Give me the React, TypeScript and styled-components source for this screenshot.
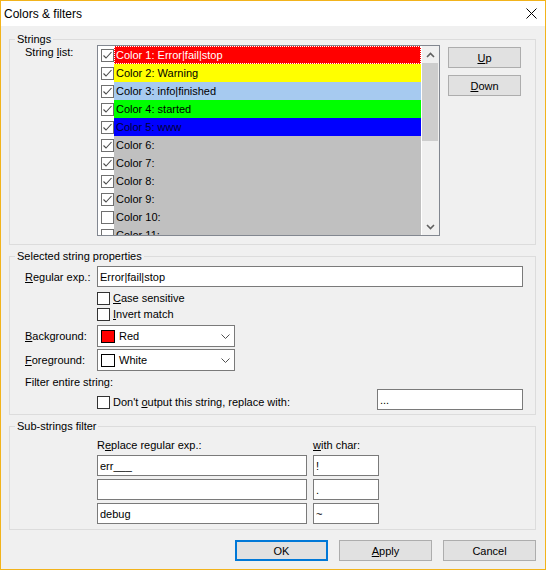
import React from 'react';
import styled, { createGlobalStyle } from 'styled-components';

const GlobalStyle = createGlobalStyle`
  html, body {
    margin: 0;
    padding: 0;
    background: #f0f0f0;
  }
  body {
    font-family: "Liberation Sans", Arial, sans-serif;
    font-size: 11px;
    color: #000;
  }
  * {
    box-sizing: border-box;
  }
`;

type Item = { label: string; bg: string; fg?: string; checked: boolean; focus?: boolean };

const items: Item[] = [
  { label: 'Color 1: Error|fail|stop', bg: '#ff0000', fg: '#ffffff', checked: true, focus: true },
  { label: 'Color 2: Warning', bg: '#ffff00', checked: true },
  { label: 'Color 3: info|finished', bg: '#a6caf0', checked: true },
  { label: 'Color 4: started', bg: '#00ff00', checked: true },
  { label: 'Color 5: www', bg: '#0000ff', fg: '#000033', checked: true },
  { label: 'Color 6:', bg: '#c0c0c0', checked: true },
  { label: 'Color 7:', bg: '#c0c0c0', checked: true },
  { label: 'Color 8:', bg: '#c0c0c0', checked: true },
  { label: 'Color 9:', bg: '#c0c0c0', checked: true },
  { label: 'Color 10:', bg: '#c0c0c0', checked: false },
  { label: 'Color 11:', bg: '#c0c0c0', checked: false },
];

const subFilters = [
  { expr: 'err___', ch: '!' },
  { expr: '', ch: '.' },
  { expr: 'debug', ch: '~' },
];

export default function App() {
  return (
    <>
      <GlobalStyle />
      <Window>
        <TitleBar>
          <TitleText>Colors &amp; filters</TitleText>
          <svg width="11" height="11" viewBox="0 0 11 11">
            <path d="M0.5 0.5 L10.5 10.5 M10.5 0.5 L0.5 10.5" stroke="#000" strokeWidth="1" />
          </svg>
        </TitleBar>

        <Body>
          <Group>
            <Legend>Strings</Legend>
            <StringsContent>
              <Label>
                String <u>l</u>ist:
              </Label>
              <ListBox>
                <Rows>
                  {items.map((it) => (
                    <Row key={it.label}>
                      <CheckCell>
                        <CheckBox $checked={it.checked} $tone="list" />
                      </CheckCell>
                      <Band $bg={it.bg} $fg={it.fg} $focus={it.focus}>
                        {it.label}
                      </Band>
                    </Row>
                  ))}
                </Rows>
                <ScrollBar>
                  <ArrowBtn>
                    <svg width="9" height="6" viewBox="0 0 9 6">
                      <path d="M1 5 L4.5 1.5 L8 5" fill="none" stroke="#606060" strokeWidth="1.6" />
                    </svg>
                  </ArrowBtn>
                  <Thumb />
                  <Track />
                  <ArrowBtn>
                    <svg width="9" height="6" viewBox="0 0 9 6">
                      <path d="M1 1 L4.5 4.5 L8 1" fill="none" stroke="#606060" strokeWidth="1.6" />
                    </svg>
                  </ArrowBtn>
                </ScrollBar>
              </ListBox>
              <SideButtons>
                <Button $w={73}>
                  <u>U</u>p
                </Button>
                <Button $w={73}>
                  <u>D</u>own
                </Button>
              </SideButtons>
            </StringsContent>
          </Group>

          <Group>
            <Legend>Selected string properties</Legend>
            <PropsContent>
              <FieldRow>
                <Label>
                  <u>R</u>egular exp.:
                </Label>
                <TextBox readOnly value="Error|fail|stop" />
              </FieldRow>
              <CheckRow $mt={5}>
                <CheckBox $checked={false} $tone="dialog" />
                <CheckLabel>
                  <u>C</u>ase sensitive
                </CheckLabel>
              </CheckRow>
              <CheckRow $mt={3}>
                <CheckBox $checked={false} $tone="dialog" />
                <CheckLabel>
                  <u>I</u>nvert match
                </CheckLabel>
              </CheckRow>
              <FieldRow $mt={4}>
                <Label>
                  <u>B</u>ackground:
                </Label>
                <Combo>
                  <Swatch $color="#ff0000" />
                  <ComboText>Red</ComboText>
                  <Chevron />
                </Combo>
              </FieldRow>
              <FieldRow $mt={2}>
                <Label>
                  <u>F</u>oreground:
                </Label>
                <Combo>
                  <Swatch $color="#ffffff" />
                  <ComboText>White</ComboText>
                  <Chevron />
                </Combo>
              </FieldRow>
              <PlainText $mt={4}>Filter entire string:</PlainText>
              <ReplaceRow>
                <CheckRow $mt={7}>
                  <CheckBox $checked={false} $tone="dialog" />
                  <CheckLabel>
                    Don't <u>o</u>utput this string, replace with:
                  </CheckLabel>
                </CheckRow>
                <TextBox readOnly value="..." $w={146} />
              </ReplaceRow>
            </PropsContent>
          </Group>

          <Group>
            <Legend>Sub-strings filter</Legend>
            <SubGrid>
              <ColHead>
                R<u>e</u>place regular exp.:
              </ColHead>
              <ColHead>
                <u>w</u>ith char:
              </ColHead>
              {subFilters.map((f, i) => (
                <React.Fragment key={i}>
                  <TextBox readOnly value={f.expr} />
                  <TextBox readOnly value={f.ch} />
                </React.Fragment>
              ))}
            </SubGrid>
          </Group>

          <ButtonRow>
            <Button $w={93} $primary>
              OK
            </Button>
            <Button $w={93}>
              <u>A</u>pply
            </Button>
            <Button $w={93}>Cancel</Button>
          </ButtonRow>
        </Body>
      </Window>
    </>
  );
}

function CheckBox({ $checked, $tone }: { $checked: boolean; $tone: 'list' | 'dialog' }) {
  return (
    <Box $tone={$tone}>
      {$checked && (
        <svg width="11" height="11" viewBox="0 0 11 11">
          <path d="M1.5 5.5 L4 8 L9.5 2" fill="none" stroke="#4a4a4a" strokeWidth="1.1" />
        </svg>
      )}
    </Box>
  );
}

function Chevron() {
  return (
    <ChevronIcon width="9" height="5" viewBox="0 0 9 5">
      <path d="M0.5 0.5 L4.5 4.5 L8.5 0.5" fill="none" stroke="#505050" strokeWidth="1" />
    </ChevronIcon>
  );
}

const Window = styled.div`
  width: 546px;
  height: 570px;
  border: 1px solid #f2b31b;
  background: #f0f0f0;
  display: flex;
  flex-direction: column;
`;

const TitleBar = styled.div`
  height: 25px;
  flex-shrink: 0;
  background: #fff;
  display: flex;
  align-items: center;
  justify-content: space-between;
  padding: 0 8px 0 3px;
`;

const TitleText = styled.span`
  font-size: 12px;
`;

const Body = styled.div`
  flex: 1;
  display: flex;
  flex-direction: column;
  gap: 5px;
  padding: 7px 9px 0 8px;
`;

const Group = styled.fieldset`
  margin: 0;
  padding: 0;
  min-width: 0;
  border: 1px solid #dcdcdc;
`;

const Legend = styled.legend`
  margin-left: 5px;
  padding: 0 2px;
  line-height: 12px;
  font-size: 11px;
`;

const StringsContent = styled.div`
  display: grid;
  grid-template-columns: 72px 343px 73px;
  align-items: start;
  padding: 0 0 8px 15px;
`;

const Label = styled.div`
  width: 72px;
  flex-shrink: 0;
  line-height: 14px;
  white-space: nowrap;
`;

const ListBox = styled.div`
  height: 191px;
  border: 1px solid #828790;
  background: #fff;
  display: flex;
  overflow: hidden;
`;

const Rows = styled.div`
  flex: 1;
  padding-right: 1px;
  display: flex;
  flex-direction: column;
  overflow: hidden;
`;

const Row = styled.div`
  height: 18px;
  flex-shrink: 0;
  display: flex;
`;

const CheckCell = styled.div`
  width: 16px;
  flex-shrink: 0;
  display: flex;
  align-items: center;
  padding-left: 3px;
`;

const Band = styled.div<{ $bg: string; $fg?: string; $focus?: boolean }>`
  flex: 1;
  background: ${(p) => p.$bg};
  color: ${(p) => p.$fg ?? '#000'};
  line-height: 18px;
  padding-left: 2px;
  white-space: nowrap;
  overflow: hidden;
  outline: ${(p) => (p.$focus ? '1px dotted #fff' : 'none')};
  outline-offset: -1px;
`;

const ScrollBar = styled.div`
  width: 17px;
  flex-shrink: 0;
  background: #f0f0f0;
  display: flex;
  flex-direction: column;
`;

const ArrowBtn = styled.div`
  height: 17px;
  flex-shrink: 0;
  display: flex;
  align-items: center;
  justify-content: center;
`;

const Thumb = styled.div`
  height: 78px;
  margin: 0 1px 0 0;
  background: #cdcdcd;
`;

const Track = styled.div`
  flex: 1;
`;

const SideButtons = styled.div`
  display: flex;
  flex-direction: column;
  gap: 7px;
  margin: 2px 0 0 8px;
`;

const Button = styled.button<{ $w: number; $primary?: boolean }>`
  width: ${(p) => p.$w}px;
  height: 21px;
  padding: 0;
  font: inherit;
  color: #000;
  background: #e1e1e1;
  border: ${(p) => (p.$primary ? '2px solid #0078d7' : '1px solid #adadad')};
  text-align: center;
`;

const PropsContent = styled.div`
  display: flex;
  flex-direction: column;
  padding: 4px 12px 4px 15px;
`;

const FieldRow = styled.div<{ $mt?: number }>`
  display: flex;
  align-items: center;
  margin-top: ${(p) => p.$mt ?? 0}px;
`;

const TextBox = styled.input<{ $w?: number }>`
  ${(p) => (p.$w ? `width: ${p.$w}px;` : 'flex: 1; width: 100%;')}
  min-width: 0;
  height: 21px;
  margin: 0;
  padding: 0 2px;
  font: inherit;
  color: #000;
  background: #fff;
  border: 1px solid #7a7a7a;
  outline: none;
`;

const CheckRow = styled.div<{ $mt?: number }>`
  display: flex;
  align-items: center;
  height: 13px;
  padding-left: 72px;
  margin-top: ${(p) => p.$mt ?? 0}px;
`;

const Box = styled.div<{ $tone: 'list' | 'dialog' }>`
  width: 13px;
  height: 13px;
  flex-shrink: 0;
  background: #fff;
  border: 1px solid ${(p) => (p.$tone === 'list' ? '#707070' : '#333333')};
  display: flex;
  align-items: center;
  justify-content: center;
`;

const CheckLabel = styled.span`
  margin-left: 3px;
  line-height: 13px;
  white-space: nowrap;
`;

const Combo = styled.div`
  width: 138px;
  height: 22px;
  background: #fff;
  border: 1px solid #7a7a7a;
  display: flex;
  align-items: center;
  padding: 0 4px 0 3px;
`;

const Swatch = styled.div<{ $color: string }>`
  width: 14px;
  height: 13px;
  background: ${(p) => p.$color};
  border: 1px solid #000;
`;

const ComboText = styled.span`
  margin-left: 4px;
`;

const ChevronIcon = styled.svg`
  margin-left: auto;
`;

const PlainText = styled.div<{ $mt?: number }>`
  line-height: 14px;
  margin-top: ${(p) => p.$mt ?? 0}px;
`;

const ReplaceRow = styled.div`
  display: flex;
  align-items: flex-start;
  height: 21px;
  justify-content: space-between;
`;

const SubGrid = styled.div`
  display: grid;
  grid-template-columns: 210px 66px;
  column-gap: 6px;
  row-gap: 3px;
  padding: 6px 0 5px 87px;
`;

const ColHead = styled.div`
  line-height: 14px;
`;

const ButtonRow = styled.div`
  display: flex;
  justify-content: flex-end;
  gap: 11px;
  margin-top: 5px;
`;
